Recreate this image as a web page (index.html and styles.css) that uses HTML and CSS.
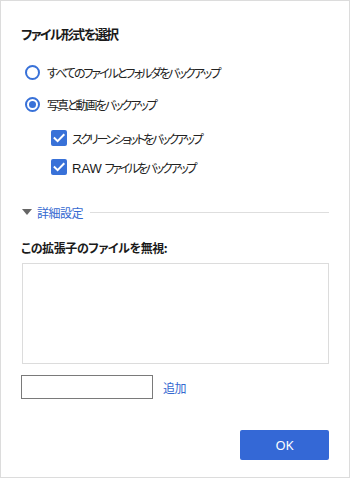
FILE: index.html
```html
<!DOCTYPE html>
<html lang="ja">
<head>
<meta charset="utf-8">
<link rel="stylesheet" href="styles.css">
</head>
<body>
<div class="dialog">
  <div class="title jp">ファイル形式を選択</div>
  <div class="row radio-row r1">
    <span class="radio"></span>
    <span class="label jp">すべてのファイルとフォルダをバックアップ</span>
  </div>
  <div class="row radio-row r2">
    <span class="radio checked"></span>
    <span class="label jp">写真と動画をバックアップ</span>
  </div>
  <div class="row check-row c1">
    <span class="check"><svg viewBox="0 0 16 16" width="16" height="16"><path d="M3.6 8.2 L6.6 11.1 L12.6 5" fill="none" stroke="#fff" stroke-width="2" stroke-linecap="square"/></svg></span>
    <span class="label jp tight">スクリーンショットをバックアップ</span>
  </div>
  <div class="row check-row c2">
    <span class="check"><svg viewBox="0 0 16 16" width="16" height="16"><path d="M3.6 8.2 L6.6 11.1 L12.6 5" fill="none" stroke="#fff" stroke-width="2" stroke-linecap="square"/></svg></span>
    <span class="label"><span class="latin">RAW</span> <span class="jp tight">ファイルをバックアップ</span></span>
  </div>
  <div class="row advanced">
    <span class="tri"></span>
    <span class="adv-label jp">詳細設定</span>
    <span class="rule"></span>
  </div>
  <div class="row ignore-title jp">この拡張子のファイルを無視:</div>
  <div class="listbox"></div>
  <div class="add-row">
    <input class="ext-input" type="text">
    <span class="add-link jp">追加</span>
  </div>
  <div class="footer">
    <button class="ok">OK</button>
  </div>
</div>
</body>
</html>
```

FILE: styles.css
```css
html, body {
  margin: 0;
  padding: 0;
  background: #fff;
}
body {
  font-family: "Noto Sans CJK JP", "Noto Sans", sans-serif;
  font-size: 12px;
  color: #222;
}
.jp {
  font-family: "Noto Sans CJK JP", sans-serif;
  font-feature-settings: "palt" 1;
  letter-spacing: -2px;
}
.jp.tight {
  letter-spacing: -2.3px;
}
.dialog {
  width: 350px;
  height: 478px;
  box-sizing: border-box;
  border: 1px solid #dcdcdc;
  padding: 23px 20px 0 20px;
  display: flex;
  flex-direction: column;
}
.row {
  height: 20px;
  display: flex;
  align-items: center;
}
.title {
  height: 20px;
  line-height: 20px;
  font-size: 13px;
  font-weight: bold;
  color: #1a1a1a;
  letter-spacing: -1.6px;
}
.radio-row { padding-left: 4px; }
.r1 { margin-top: 18px; }
.r2 { margin-top: 12px; }
.radio {
  width: 15px;
  height: 15px;
  box-sizing: border-box;
  border: 2px solid #3871d8;
  border-radius: 50%;
  margin-right: 7px;
  display: flex;
  align-items: center;
  justify-content: center;
}
.radio.checked::after {
  content: "";
  width: 7px;
  height: 7px;
  border-radius: 50%;
  background: #3871d8;
}
.check-row { padding-left: 30px; }
.c1 { margin-top: 14px; }
.c2 { margin-top: 9px; }
.check {
  width: 16px;
  height: 16px;
  border-radius: 2px;
  background: #3871d8;
  margin-right: 5px;
  display: flex;
}
.latin {
  font-family: "Liberation Sans", Arial, sans-serif;
  font-size: 13px;
  color: #1a1a1a;
}
.advanced { margin-top: 25px; }
.tri {
  width: 0;
  height: 0;
  border-left: 5.5px solid transparent;
  border-right: 5.5px solid transparent;
  border-top: 6px solid #666;
  margin-left: 1px;
  margin-right: 5px;
}
.adv-label {
  color: #3468d0;
  letter-spacing: -0.5px;
}
.rule {
  flex: 1;
  height: 1px;
  background: #dedede;
  margin-left: 7px;
}
.ignore-title {
  margin-top: 15px;
  font-weight: bold;
  color: #1a1a1a;
  letter-spacing: -0.4px;
}
.listbox {
  margin-top: 6px;
  margin-left: 1px;
  height: 101px;
  box-sizing: border-box;
  border: 1px solid #dcdcdc;
}
.add-row {
  margin-top: 11px;
  display: flex;
  align-items: center;
}
.ext-input {
  width: 132px;
  height: 24px;
  box-sizing: border-box;
  border: 1px solid #7a7a7a;
  margin: 0;
  padding: 0 4px;
  outline: none;
}
.add-link {
  color: #3468d0;
  margin-left: 10px;
  letter-spacing: -0.5px;
}
.footer {
  margin-top: 31px;
  display: flex;
  justify-content: flex-end;
}
.ok {
  width: 89px;
  height: 30px;
  border: none;
  border-radius: 2px;
  background: #3468d6;
  color: #fff;
  font-family: "Noto Sans", sans-serif;
  font-size: 13px;
  margin: 0;
  padding: 0;
}
```
